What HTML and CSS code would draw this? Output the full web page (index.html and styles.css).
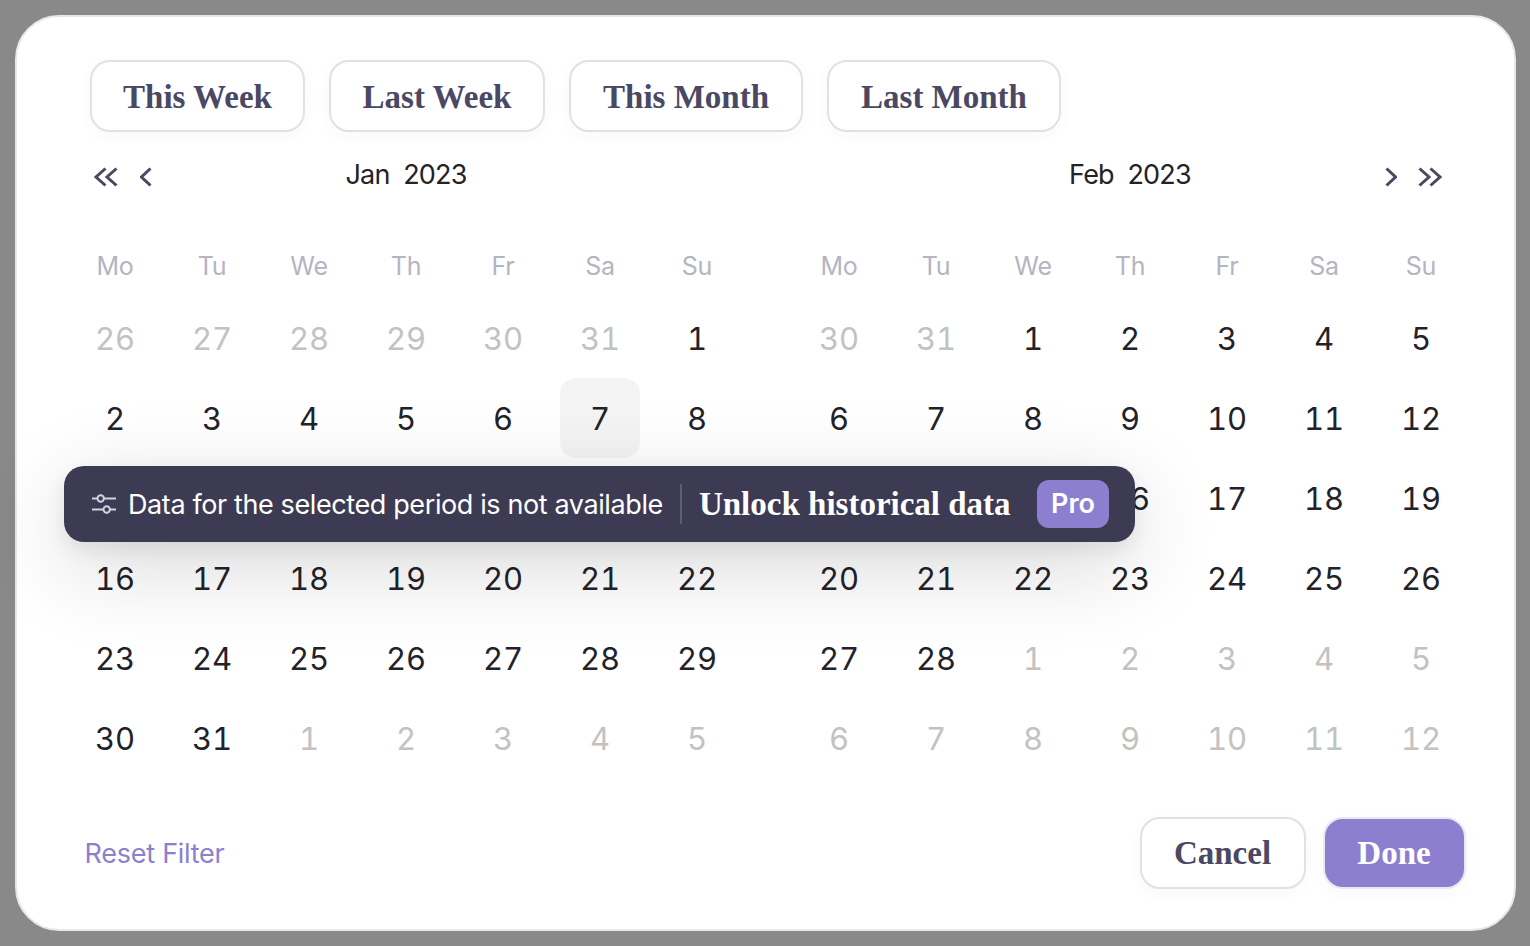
FILE: index.html
```html
<!DOCTYPE html>
<html lang="en">
<head>
    <meta charset="UTF-8">
    <title>Date range filter</title>
    <link rel="stylesheet" href="styles.css">
</head>
<body>
    <div class="card">
        <div class="presets">
            <button class="btn preset">This Week</button>
            <button class="btn preset">Last Week</button>
            <button class="btn preset">This Month</button>
            <button class="btn preset">Last Month</button>
        </div>

        <div class="calendars">
            <div class="calendar">
                <div class="cal-head">
                    <div class="nav">
                        <svg class="nav-double" viewBox="0 0 24 20"><path d="M11.5 1.5 2 10l9.500 8.500M22.500 1.500 13 10l9.500 8.500"/></svg>
                        <svg class="nav-single" viewBox="0 0 12 20"><path d="M10.500 1.500 1.500 10l9 8.500"/></svg>
                    </div>
                    <div class="month">Jan&nbsp; 2023</div>
                    <div class="nav"></div>
                </div>
                <div class="grid">
                    <div class="wd">Mo</div><div class="wd">Tu</div><div class="wd">We</div><div class="wd">Th</div><div class="wd">Fr</div><div class="wd">Sa</div><div class="wd">Su</div>
                    <div class="day off">26</div><div class="day off">27</div><div class="day off">28</div><div class="day off">29</div><div class="day off">30</div><div class="day off">31</div><div class="day">1</div>
                    <div class="day">2</div><div class="day">3</div><div class="day">4</div><div class="day">5</div><div class="day">6</div><div class="day today">7</div><div class="day">8</div>
                    <div class="day">9</div><div class="day">10</div><div class="day">11</div><div class="day">12</div><div class="day">13</div><div class="day">14</div><div class="day">15</div>
                    <div class="day">16</div><div class="day">17</div><div class="day">18</div><div class="day">19</div><div class="day">20</div><div class="day">21</div><div class="day">22</div>
                    <div class="day">23</div><div class="day">24</div><div class="day">25</div><div class="day">26</div><div class="day">27</div><div class="day">28</div><div class="day">29</div>
                    <div class="day">30</div><div class="day">31</div><div class="day off">1</div><div class="day off">2</div><div class="day off">3</div><div class="day off">4</div><div class="day off">5</div>
                </div>
            </div>

            <div class="calendar">
                <div class="cal-head">
                    <div class="nav"></div>
                    <div class="month">Feb&nbsp; 2023</div>
                    <div class="nav nav-right">
                        <svg class="nav-single" viewBox="0 0 12 20"><path d="M1.500 1.500 10.500 10l-9 8.500"/></svg>
                        <svg class="nav-double" viewBox="0 0 24 20"><path d="M1.500 1.500 11 10l-9.500 8.500M12.500 1.500 22 10l-9.500 8.500"/></svg>
                    </div>
                </div>
                <div class="grid">
                    <div class="wd">Mo</div><div class="wd">Tu</div><div class="wd">We</div><div class="wd">Th</div><div class="wd">Fr</div><div class="wd">Sa</div><div class="wd">Su</div>
                    <div class="day off">30</div><div class="day off">31</div><div class="day">1</div><div class="day">2</div><div class="day">3</div><div class="day">4</div><div class="day">5</div>
                    <div class="day">6</div><div class="day">7</div><div class="day">8</div><div class="day">9</div><div class="day">10</div><div class="day">11</div><div class="day">12</div>
                    <div class="day">13</div><div class="day">14</div><div class="day">15</div><div class="day">16</div><div class="day">17</div><div class="day">18</div><div class="day">19</div>
                    <div class="day">20</div><div class="day">21</div><div class="day">22</div><div class="day">23</div><div class="day">24</div><div class="day">25</div><div class="day">26</div>
                    <div class="day">27</div><div class="day">28</div><div class="day off">1</div><div class="day off">2</div><div class="day off">3</div><div class="day off">4</div><div class="day off">5</div>
                    <div class="day off">6</div><div class="day off">7</div><div class="day off">8</div><div class="day off">9</div><div class="day off">10</div><div class="day off">11</div><div class="day off">12</div>
                </div>
            </div>
        </div>

        <div class="footer">
            <a class="reset">Reset Filter</a>
            <div class="actions">
                <button class="btn cancel">Cancel</button>
                <button class="btn done">Done</button>
            </div>
        </div>

        <div class="notice">
            <svg class="notice-icon" viewBox="0 0 24 20"><path d="M0 4.500h5.500M12 4.500h12M0 15.500h11.500M18 15.500h6"/><circle cx="8.700" cy="4.500" r="3.200"/><circle cx="14.700" cy="15.500" r="3.200"/></svg>
            <span class="notice-text">Data for the selected period is not available</span>
            <span class="notice-sep"></span>
            <span class="notice-link">Unlock historical data</span>
            <span class="pro">Pro</span>
        </div>
    </div>
</body>
</html>
```

FILE: styles.css
```css
body {
    margin: 0;
    padding: 15px 14px 15px 15px;
    background: #898989;
    font-family: Inter, "Liberation Sans", sans-serif;
    color: #222228;
}
.card {
    position: relative;
    box-sizing: border-box;
    width: 1501px;
    height: 916px;
    padding: 43px 44.500px 0 49.500px;
    background: #fff;
    border: 2px solid #e6e6ec;
    border-radius: 44px;
}
.btn {
    box-sizing: border-box;
    height: 72px;
    padding: 0;
    background: #fff;
    border: 2px solid #e0e0e8;
    border-radius: 20px;
    box-shadow: 0 4px 16px rgba(60, 58, 84, 0.03);
    font-family: "Liberation Serif", serif;
    font-size: 33px;
    font-weight: 700;
    color: #4a4863;
}
.presets {
    display: flex;
    gap: 24px;
    padding-left: 23.500px;
}
.preset {
    width: 215px;
    padding-top: 2px;
}
.preset:nth-child(2) {
    width: 216px;
}
.preset:nth-child(3),
.preset:nth-child(4) {
    width: 234px;
}
.calendars {
    display: flex;
    gap: 45px;
    margin-top: 18px;
}
.calendar {
    width: 679px;
}
.cal-head {
    display: flex;
    align-items: center;
    justify-content: space-between;
    height: 50px;
}
.nav {
    display: flex;
    align-items: center;
    gap: 21.500px;
    width: 120px;
    padding: 4px 0 0 27.500px;
}
.nav-right {
    justify-content: flex-end;
    padding: 4px 27.500px 0 0;
}
.nav svg {
    height: 20px;
    fill: none;
    stroke: #4a4863;
    stroke-width: 3;
}
.nav-double {
    width: 24px;
}
.nav-single {
    width: 12px;
}
.month {
    font-size: 27px;
    letter-spacing: -0.8px;
    line-height: 50px;
}
.grid {
    display: grid;
    grid-template-columns: repeat(7, 97px);
    grid-template-rows: 66px;
    grid-auto-rows: 80px;
    margin-top: 32px;
}
.wd {
    display: flex;
    align-items: center;
    justify-content: center;
    padding-top: 2px;
    font-size: 25px;
    letter-spacing: -0.2px;
    color: #b4b4c2;
}
.day {
    justify-self: center;
    width: 80px;
    height: 80px;
    border-radius: 16px;
    font-size: 31px;
    font-variant-numeric: tabular-nums;
    line-height: 82px;
    text-align: center;
}
.off {
    color: #c2c2c2;
}
.today {
    background: #f4f4f4;
}
.footer {
    display: flex;
    align-items: center;
    justify-content: space-between;
    margin-top: 39px;
    padding: 0 4px 0 18px;
}
.reset {
    font-size: 27px;
    letter-spacing: -0.25px;
    color: #8d7fd0;
}
.actions {
    display: flex;
    gap: 17px;
}
.cancel {
    width: 166px;
}
.done {
    width: 143px;
    background: #8d7fd0;
    border-color: #e8e8f0;
    color: #fff;
}
.notice {
    position: absolute;
    left: 47px;
    top: 449px;
    display: flex;
    align-items: center;
    box-sizing: border-box;
    width: 1071px;
    height: 76px;
    padding: 0 26px 0 28px;
    background: #3d3b54;
    border-radius: 20px;
    box-shadow: 0 24px 90px rgba(0, 0, 0, 0.16), 0 8px 20px rgba(0, 0, 0, 0.08);
    color: #fff;
}
.notice-icon {
    flex: none;
    width: 24px;
    height: 20px;
    margin-right: 12px;
    fill: none;
    stroke: #d4d4dc;
    stroke-width: 2;
}
.notice-text {
    font-size: 27px;
    letter-spacing: -0.39px;
    white-space: nowrap;
}
.notice-sep {
    flex: none;
    width: 2px;
    height: 40px;
    margin: 0 17px;
    background: #5f5d75;
}
.notice-link {
    font-family: "Liberation Serif", serif;
    font-size: 33px;
    font-weight: 700;
    white-space: nowrap;
}
.pro {
    flex: none;
    margin-left: auto;
    width: 72px;
    height: 48px;
    background: #8d7fd0;
    border-radius: 12px;
    font-size: 27px;
    font-weight: 600;
    line-height: 48px;
    text-align: center;
}
```
